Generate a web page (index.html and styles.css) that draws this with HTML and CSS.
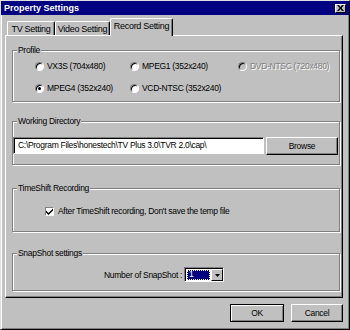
FILE: index.html
```html
<!DOCTYPE html>
<html lang="en">
<head>
    <title>Property Settings</title>
    <link rel="stylesheet" href="styles.css">
</head>
<body>
    <div class="window">
        <div class="titlebar">
            <span class="title">Property Settings</span>
            <span class="close">
                <svg width="7" height="6" viewBox="0 0 7 6"><path d="M0 0h2l1.5 2 1.5-2h2l-2.5 3 2.5 3h-2l-1.5-2-1.5 2h-2l2.5-3z" fill="#000"/></svg>
            </span>
        </div>

        <div class="tabs">
            <div class="tab tab-tv">TV Setting</div>
            <div class="tab tab-video">Video Setting</div>
            <div class="tab tab-record active">Record Setting</div>
        </div>

        <div class="panel">
            <fieldset class="group profile">
                <legend>Profile</legend>
                <div class="radio-grid">
                    <label class="option"><span class="radio"></span>VX3S (704x480)</label>
                    <label class="option"><span class="radio"></span>MPEG1 (352x240)</label>
                    <label class="option disabled"><span class="radio"></span>DVD-NTSC (720x480)</label>
                    <label class="option"><span class="radio checked"></span>MPEG4 (352x240)</label>
                    <label class="option"><span class="radio"></span>VCD-NTSC (352x240)</label>
                </div>
            </fieldset>

            <fieldset class="group workdir">
                <legend>Working Directory</legend>
                <div class="dir-row">
                    <div class="textbox">C:\Program Files\honestech\TV Plus 3.0\TVR 2.0\cap\</div>
                    <button class="btn browse">Browse</button>
                </div>
            </fieldset>

            <fieldset class="group timeshift">
                <legend>TimeShift Recording</legend>
                <label class="check-row">
                    <span class="checkbox">
                        <svg width="7" height="7" viewBox="0 0 7 7"><path d="M0 2.5l2.5 2.5 4.5-4.5v2l-4.5 4.5-2.5-2.5z" fill="#000"/></svg>
                    </span>
                    After TimeShift recording, Don't save the temp file
                </label>
            </fieldset>

            <fieldset class="group snapshot">
                <legend>SnapShot settings</legend>
                <div class="snap-row">
                    <span>Number of SnapShot :</span>
                    <div class="select">
                        <span class="select-value">1</span>
                        <span class="select-arrow">
                            <svg width="5" height="3" viewBox="0 0 5 3"><path d="M0 0h5l-2.5 3z" fill="#000"/></svg>
                        </span>
                    </div>
                </div>
            </fieldset>
        </div>

        <div class="actions">
            <button class="btn default ok">OK</button>
            <button class="btn cancel">Cancel</button>
        </div>
    </div>
</body>
</html>
```

FILE: styles.css
```css
/* classic dialog look */
body {
    margin: 0;
    font-family: "Liberation Sans", Arial, sans-serif;
    font-size: 8.5px;
    letter-spacing: -0.3px;
    color: #000;
}

.window {
    width: 350px;
    height: 330px;
    box-sizing: border-box;
    background-color: #c0c0c0;
    border: 1px solid;
    border-color: #dfdfdf #000 #000 #dfdfdf;
    box-shadow: inset 1px 1px #fff, inset -1px -1px #808080;
    white-space: nowrap;
}

.titlebar {
    height: 14px;
    background-color: #000080;
    display: flex;
    align-items: center;
    justify-content: space-between;
    padding: 0 3px;
}

.title {
    color: #fff;
    font-weight: bold;
    font-size: 9px;
    letter-spacing: 0;
}

.close {
    width: 11px;
    height: 9px;
    box-sizing: border-box;
    background-color: #c0c0c0;
    border: 1px solid;
    border-color: #fff #000 #000 #fff;
    display: flex;
    align-items: center;
    justify-content: center;
}

.tabs {
    display: flex;
    align-items: flex-end;
    height: 17px;
    margin-top: 3px;
    padding-left: 6px;
}

.tab {
    height: 14px;
    box-sizing: border-box;
    border: 1px solid;
    border-bottom: none;
    border-color: #fff #000 #000 #fff;
    border-radius: 2px 2px 0 0;
    box-shadow: inset -1px 0 #808080;
    display: flex;
    align-items: center;
    justify-content: center;
    font-size: 9px;
}

.tab-tv { width: 48px; }
.tab-video { width: 55px; }
.tab-record { width: 63px; }

.tab.active {
    height: 18px;
    margin-bottom: -1px;
    background-color: #c0c0c0;
    position: relative;
    z-index: 1;
    padding-bottom: 3px;
}

.panel {
    width: 338px;
    height: 263px;
    margin-left: 4px;
    box-sizing: border-box;
    border: 1px solid;
    border-color: #fff #000 #000 #fff;
    box-shadow: inset -1px -1px #808080;
    padding: 9px 0 0 6px;
}

.group {
    width: 328px;
    box-sizing: border-box;
    margin: 0;
    padding: 0;
    min-inline-size: 0;
    border: 1px solid #808080;
    box-shadow: inset 1px 1px #fff, 1px 1px #fff;
}

.group legend {
    margin-left: 4px;
    padding: 0 1px;
    line-height: 10px;
    background-color: #c0c0c0;
}

.profile { height: 57px; }

.radio-grid {
    display: grid;
    grid-template-columns: 95px 108px auto;
    grid-auto-rows: 22px;
    padding-left: 22px;
}

.option {
    display: flex;
    align-items: center;
    gap: 3px;
}

.radio {
    width: 9px;
    height: 9px;
    box-sizing: border-box;
    border-radius: 50%;
    background-color: #fff;
    border: 1px solid;
    border-color: #808080 #fff #fff #808080;
    box-shadow: inset 1px 1px #000;
    display: flex;
    align-items: center;
    justify-content: center;
}

.radio.checked::after {
    content: "";
    width: 3px;
    height: 3px;
    border-radius: 50%;
    background-color: #000;
}

.option.disabled {
    color: #808080;
    text-shadow: 1px 1px #fff;
}

.option.disabled .radio {
    background-color: #c0c0c0;
}

.workdir {
    height: 49px;
    margin-top: 14px;
}

.dir-row {
    display: flex;
    align-items: flex-start;
    padding-top: 11px;
}

.textbox {
    width: 251px;
    height: 17px;
    box-sizing: border-box;
    background-color: #fff;
    border: 1px solid;
    border-color: #808080 #fff #fff #808080;
    box-shadow: inset 1px 1px #000;
    padding-left: 4px;
    line-height: 15px;
    overflow: hidden;
}

.btn {
    font: inherit;
    letter-spacing: inherit;
    color: #000;
    background-color: #c0c0c0;
    height: 18px;
    box-sizing: border-box;
    border: 1px solid;
    border-color: #fff #000 #000 #fff;
    box-shadow: inset -1px -1px #808080;
    padding: 0;
}

.browse {
    width: 72px;
    margin-left: 2px;
}

.timeshift {
    height: 49px;
    margin-top: 18px;
}

.check-row {
    display: flex;
    align-items: center;
    gap: 4px;
    padding: 13px 0 0 32px;
    line-height: 10px;
}

.checkbox {
    width: 9px;
    height: 9px;
    box-sizing: border-box;
    background-color: #fff;
    border: 1px solid;
    border-color: #808080 #fff #fff #808080;
    display: flex;
    align-items: center;
    justify-content: center;
}

.snapshot {
    height: 43px;
    margin-top: 16px;
}

.snap-row {
    display: flex;
    align-items: center;
    gap: 2px;
    padding: 9px 0 0 91px;
}

.select {
    width: 40px;
    height: 15px;
    box-sizing: border-box;
    background-color: #fff;
    border: 1px solid;
    border-color: #808080 #fff #fff #808080;
    box-shadow: inset 1px 1px #000;
    display: flex;
    padding: 1px 0 0 1px;
}

.select-value {
    flex: 1;
    margin: 1px;
    background-color: #000080;
    color: #fff;
    outline: 1px dotted #fff;
    outline-offset: -1px;
    line-height: 9px;
    padding-left: 2px;
}

.select-arrow {
    width: 12px;
    box-sizing: border-box;
    background-color: #c0c0c0;
    border: 1px solid;
    border-color: #fff #000 #000 #fff;
    display: flex;
    align-items: center;
    justify-content: center;
}

.actions {
    display: flex;
    justify-content: flex-end;
    gap: 7px;
    margin-top: 6px;
    padding-right: 6px;
}

.ok { width: 54px; }
.cancel { width: 52px; }

.btn.default {
    border-color: #000;
    box-shadow: inset 1px 1px #fff, inset -1px -1px #808080;
}
```
